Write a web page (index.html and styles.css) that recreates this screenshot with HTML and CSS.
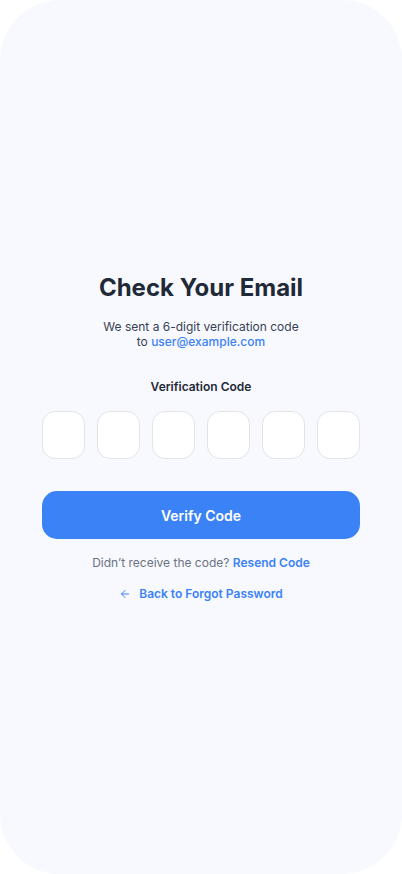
FILE: index.html
```html
<!DOCTYPE html>
<html lang="en">
<head>
<meta charset="utf-8">
<title>Check Your Email</title>
<link rel="stylesheet" href="styles.css">
</head>
<body>
<div class="screen">
  <main class="content">
    <h1 class="title">Check Your Email</h1>
    <p class="subtitle">We sent a 6-digit verification code<br>to <span class="email">user@example.com</span></p>
    <div class="label">Verification Code</div>
    <div class="otp">
      <div class="box"></div>
      <div class="box"></div>
      <div class="box"></div>
      <div class="box"></div>
      <div class="box"></div>
      <div class="box"></div>
    </div>
    <button class="verify">Verify Code</button>
    <p class="resend">Didn’t receive the code? <span class="link">Resend Code</span></p>
    <a class="back">
      <svg class="arrow" width="12" height="12" viewBox="0 0 24 24" fill="none" stroke="currentColor" stroke-width="2" stroke-linecap="round" stroke-linejoin="round"><path d="M19 12H5"/><path d="M12 19l-7-7 7-7"/></svg>
      <span>Back to Forgot Password</span>
    </a>
  </main>
</div>
</body>
</html>
```
FILE: styles.css
```css
* { box-sizing: border-box; }
html, body { margin: 0; padding: 0; background: #ffffff; }
body { font-family: Inter, "Noto Sans", sans-serif; }
.screen {
  width: 402px;
  height: 874px;
  border-radius: 60px;
  background: #f8f9ff;
  display: flex;
  align-items: center;
  justify-content: center;
  overflow: hidden;
}
.content {
  width: 100%;
  padding: 0 42px;
  display: flex;
  flex-direction: column;
  align-items: center;
}
.title {
  margin: 0;
  font-size: 24px;
  font-weight: 700;
  color: #1f2937;
  line-height: 32px;
}
.subtitle {
  margin: 15px 0 0;
  font-size: 12px;
  line-height: 15px;
  color: #374151;
  text-align: center;
}
.email { color: #3b82f6; font-weight: 500; }
.label {
  margin-top: 30px;
  font-size: 12px;
  font-weight: 600;
  color: #1f2937;
  line-height: 16px;
}
.otp {
  margin-top: 16px;
  width: 100%;
  display: grid;
  grid-template-columns: repeat(6, 1fr);
  gap: 12px;
}
.box {
  height: 48px;
  background: #ffffff;
  border: 1px solid #e2e4ea;
  border-radius: 13px;
}
.verify {
  margin-top: 32px;
  width: 100%;
  height: 48px;
  border: none;
  border-radius: 15px;
  background: #3b82f6;
  color: #ffffff;
  font-family: Inter, "Noto Sans", sans-serif;
  font-size: 14px;
  font-weight: 600;
}
.resend {
  margin: 16px 0 0;
  font-size: 12px;
  line-height: 16px;
  color: #6b7280;
}
.link { color: #3b82f6; font-weight: 600; }
.back {
  margin-top: 15px;
  display: flex;
  align-items: center;
  gap: 8px;
  color: #3b82f6;
  font-size: 12px;
  font-weight: 600;
  line-height: 16px;
}
.arrow { display: block; }
```
